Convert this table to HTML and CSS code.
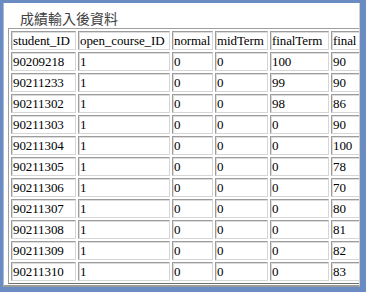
FILE: index.html
```html
<!DOCTYPE html>
<html>
<head>
<meta charset="utf-8">
<link rel="stylesheet" href="styles.css">
</head>
<body>
<div class="frame">
  <div class="inner">
    <div class="title">成績輸入後資料</div>
    <div class="clip">
      <table class="grid">
        <colgroup>
          <col class="c1"><col class="c2"><col class="c3"><col class="c4"><col class="c5"><col class="c6">
        </colgroup>
        <tr><td>student_ID</td><td>open_course_ID</td><td>normal</td><td>midTerm</td><td>finalTerm</td><td>final</td></tr>
        <tr><td>90209218</td><td>1</td><td>0</td><td>0</td><td>100</td><td>90</td></tr>
        <tr><td>90211233</td><td>1</td><td>0</td><td>0</td><td>99</td><td>90</td></tr>
        <tr><td>90211302</td><td>1</td><td>0</td><td>0</td><td>98</td><td>86</td></tr>
        <tr><td>90211303</td><td>1</td><td>0</td><td>0</td><td>0</td><td>90</td></tr>
        <tr><td>90211304</td><td>1</td><td>0</td><td>0</td><td>0</td><td>100</td></tr>
        <tr><td>90211305</td><td>1</td><td>0</td><td>0</td><td>0</td><td>78</td></tr>
        <tr><td>90211306</td><td>1</td><td>0</td><td>0</td><td>0</td><td>70</td></tr>
        <tr><td>90211307</td><td>1</td><td>0</td><td>0</td><td>0</td><td>80</td></tr>
        <tr><td>90211308</td><td>1</td><td>0</td><td>0</td><td>0</td><td>81</td></tr>
        <tr><td>90211309</td><td>1</td><td>0</td><td>0</td><td>0</td><td>82</td></tr>
        <tr><td>90211310</td><td>1</td><td>0</td><td>0</td><td>0</td><td>83</td></tr>
      </table>
    </div>
  </div>
</div>
</body>
</html>
```
FILE: styles.css
```css
html, body {
  margin: 0;
  padding: 0;
  background: #ffffff;
}
.frame {
  width: 366px;
  height: 292px;
  box-sizing: border-box;
  border-left: 3px solid #6b8cc2;
  border-top: 3px solid #6b8cc2;
  border-right: 6px solid #6b8cc2;
  border-bottom: 5px solid #6b8cc2;
  background: #ffffff;
  overflow: hidden;
}
.inner {
  height: 100%;
  box-sizing: border-box;
  padding: 0 0 0 4px;
  border-left: 1px solid #a9bcdc;
  border-right: 1px solid #d0d0d0;
  border-bottom: 2px solid #9a9a9a;
  display: flex;
  flex-direction: column;
}
.title {
  font-family: "Noto Sans CJK TC", "Noto Sans CJK SC", sans-serif;
  font-size: 14px;
  line-height: 20px;
  color: #404040;
  padding: 5px 0 0 12px;
  height: 20px;
}
.clip {
  overflow: hidden;
  width: 351px;
  flex: 1;
}
.grid {
  table-layout: fixed;
  width: 386px;
  border-collapse: separate;
  border-spacing: 2px;
  border: 1px solid #a0a0a0;
  border-right-color: #707070;
  border-bottom-color: #707070;
  font-family: "Liberation Serif", serif;
  font-size: 13px;
  letter-spacing: -0.1px;
  color: #000;
}
.c1 { width: 65px; }
.c2 { width: 92px; }
.c3 { width: 41px; }
.c4 { width: 53px; }
.c5 { width: 59px; }
.c6 { width: 60px; }
.grid td {
  height: 19px;
  box-sizing: border-box;
  padding: 0 0 0 1px;
  border: 1px solid #9c9c9c;
  border-right-color: #d6d6d6;
  border-bottom-color: #d6d6d6;
  box-shadow: inset 1px 1px 0 #dcdcdc;
  white-space: nowrap;
  line-height: 17px;
  vertical-align: middle;
}
```
